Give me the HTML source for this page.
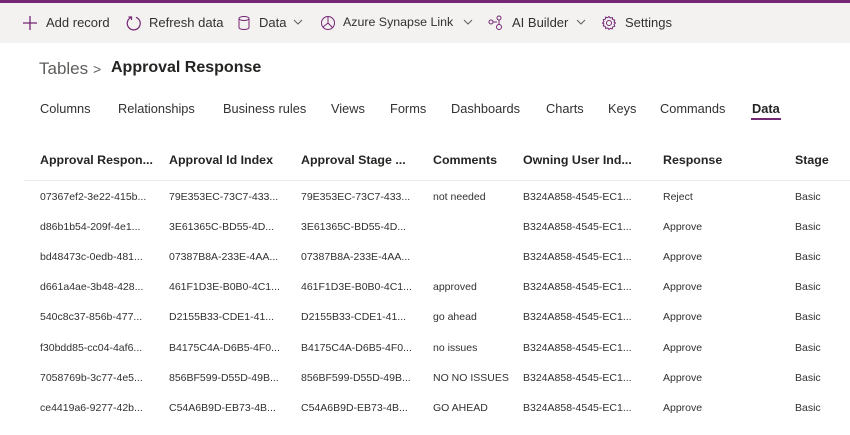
<!DOCTYPE html>
<html><head><style>
body{margin:0;width:850px;height:435px;overflow:hidden;background:#fff;font-family:"Liberation Sans",sans-serif;color:#323130;position:relative}
.top{position:absolute;left:0;top:0;width:850px;height:3px;background:#742774}
.bar{position:absolute;left:0;top:3px;width:850px;height:40px;background:#f3f2f1}
.bar span{position:absolute;top:12px;font-size:13px;color:#323130;white-space:nowrap}
.bar svg{position:absolute;top:12px}
.ab{position:absolute;white-space:nowrap}
.tab{position:absolute;top:101px;font-size:12.8px;color:#323130;white-space:nowrap}
.h{position:absolute;top:153px;font-size:12.4px;font-weight:bold;color:#252423;white-space:nowrap}
.c{position:absolute;font-size:10.5px;color:#323130;white-space:nowrap}
</style></head><body>
<div class="top"></div>
<div class="bar">
<svg style="left:22px" width="16" height="16" viewBox="0 0 16 16"><path d="M8 1v14M1 8h14" stroke="#742774" stroke-width="1.3" fill="none"/></svg>
<span style="left:46px">Add record</span>
<svg style="left:126px" width="16" height="16" viewBox="0 0 16 16"><path d="M5 2.5A6.5 6.5 0 1 0 10 2.3" stroke="#742774" stroke-width="1.2" fill="none"/><path d="M2.5 2h3v3" stroke="#742774" stroke-width="1.2" fill="none"/></svg>
<span style="left:149px">Refresh data</span>
<svg style="left:237px" width="14" height="16" viewBox="0 0 14 16"><ellipse cx="7" cy="3.5" rx="5" ry="2" stroke="#742774" fill="none"/><path d="M2 3.5v9c0 1.1 2.2 2 5 2s5-.9 5-2v-9" stroke="#742774" fill="none"/></svg>
<span style="left:259px">Data</span>
<svg style="left:293px;top:16px" width="10" height="7" viewBox="0 0 10 7"><path d="M1 1l4 4 4-4" stroke="#605e5c" fill="none"/></svg>
<svg style="left:320px" width="16" height="16" viewBox="0 0 16 16"><circle cx="8" cy="8" r="6.5" stroke="#742774" fill="none"/><path d="M8 1.5v6.5l4.5 4.5M8 8L3 12" stroke="#742774" fill="none"/></svg>
<span style="left:343px;font-size:12.4px">Azure Synapse Link</span>
<svg style="left:463px;top:16px" width="10" height="7" viewBox="0 0 10 7"><path d="M1 1l4 4 4-4" stroke="#605e5c" fill="none"/></svg>
<svg style="left:488px" width="16" height="16" viewBox="0 0 16 16"><circle cx="3" cy="7" r="2" stroke="#742774" fill="none"/><circle cx="11" cy="3" r="2" stroke="#742774" fill="none"/><circle cx="11" cy="12" r="2.5" stroke="#742774" fill="none"/><path d="M5 7h4M11 5v4.5" stroke="#742774" fill="none"/></svg>
<span style="left:512px">AI Builder</span>
<svg style="left:576px;top:16px" width="10" height="7" viewBox="0 0 10 7"><path d="M1 1l4 4 4-4" stroke="#605e5c" fill="none"/></svg>
<svg style="left:601px" width="16" height="16" viewBox="0 0 16 16"><circle cx="8" cy="8" r="2.5" stroke="#742774" fill="none"/><path d="M8 1.5l1.3 1.6 2-.6.4 2 2 .6-.6 2L14.5 8l-1.4 1.3.6 2-2 .6-.4 2-2-.6L8 14.5l-1.3-1.6-2 .6-.4-2-2-.6.6-2L1.5 8l1.4-1.3-.6-2 2-.6.4-2 2 .6z" stroke="#742774" fill="none"/></svg>
<span style="left:625px">Settings</span>
</div>
<div class="ab" style="left:39px;top:59px;font-size:17px;color:#605e5c">Tables</div>
<div class="ab" style="left:93px;top:61px;font-size:14px;color:#605e5c">&gt;</div>
<div class="ab" style="left:111px;top:59px;font-size:16px;font-weight:bold;color:#252423">Approval Response</div>
<div class="tab" style="left:40px">Columns</div>
<div class="tab" style="left:118px">Relationships</div>
<div class="tab" style="left:223px">Business rules</div>
<div class="tab" style="left:331px">Views</div>
<div class="tab" style="left:390px">Forms</div>
<div class="tab" style="left:451px">Dashboards</div>
<div class="tab" style="left:546px">Charts</div>
<div class="tab" style="left:608px">Keys</div>
<div class="tab" style="left:660px">Commands</div>
<div class="tab" style="left:752px;font-weight:bold;color:#252423">Data</div>
<div class="ab" style="left:751px;top:118px;width:30px;height:2px;background:#742774"></div>
<div class="h" style="left:40px">Approval Respon...</div>
<div class="h" style="left:169px">Approval Id Index</div>
<div class="h" style="left:301px">Approval Stage ...</div>
<div class="h" style="left:433px">Comments</div>
<div class="h" style="left:523px">Owning User Ind...</div>
<div class="h" style="left:663px">Response</div>
<div class="h" style="left:795px">Stage</div>
<div class="ab" style="left:24px;top:180px;width:826px;height:1px;background:#edebe9"></div>
<div class="c" style="left:40px;top:191px">07367ef2-3e22-415b...</div><div class="c" style="left:169px;top:191px">79E353EC-73C7-433...</div><div class="c" style="left:301px;top:191px">79E353EC-73C7-433...</div><div class="c" style="left:433px;top:191px">not needed</div><div class="c" style="left:523px;top:191px">B324A858-4545-EC1...</div><div class="c" style="left:663px;top:191px">Reject</div><div class="c" style="left:795px;top:191px">Basic</div>
<div class="c" style="left:40px;top:221px">d86b1b54-209f-4e1...</div><div class="c" style="left:169px;top:221px">3E61365C-BD55-4D...</div><div class="c" style="left:301px;top:221px">3E61365C-BD55-4D...</div><div class="c" style="left:523px;top:221px">B324A858-4545-EC1...</div><div class="c" style="left:663px;top:221px">Approve</div><div class="c" style="left:795px;top:221px">Basic</div>
<div class="c" style="left:40px;top:251px">bd48473c-0edb-481...</div><div class="c" style="left:169px;top:251px">07387B8A-233E-4AA...</div><div class="c" style="left:301px;top:251px">07387B8A-233E-4AA...</div><div class="c" style="left:523px;top:251px">B324A858-4545-EC1...</div><div class="c" style="left:663px;top:251px">Approve</div><div class="c" style="left:795px;top:251px">Basic</div>
<div class="c" style="left:40px;top:281px">d661a4ae-3b48-428...</div><div class="c" style="left:169px;top:281px">461F1D3E-B0B0-4C1...</div><div class="c" style="left:301px;top:281px">461F1D3E-B0B0-4C1...</div><div class="c" style="left:433px;top:281px">approved</div><div class="c" style="left:523px;top:281px">B324A858-4545-EC1...</div><div class="c" style="left:663px;top:281px">Approve</div><div class="c" style="left:795px;top:281px">Basic</div>
<div class="c" style="left:40px;top:311px">540c8c37-856b-477...</div><div class="c" style="left:169px;top:311px">D2155B33-CDE1-41...</div><div class="c" style="left:301px;top:311px">D2155B33-CDE1-41...</div><div class="c" style="left:433px;top:311px">go ahead</div><div class="c" style="left:523px;top:311px">B324A858-4545-EC1...</div><div class="c" style="left:663px;top:311px">Approve</div><div class="c" style="left:795px;top:311px">Basic</div>
<div class="c" style="left:40px;top:342px">f30bdd85-cc04-4af6...</div><div class="c" style="left:169px;top:342px">B4175C4A-D6B5-4F0...</div><div class="c" style="left:301px;top:342px">B4175C4A-D6B5-4F0...</div><div class="c" style="left:433px;top:342px">no issues</div><div class="c" style="left:523px;top:342px">B324A858-4545-EC1...</div><div class="c" style="left:663px;top:342px">Approve</div><div class="c" style="left:795px;top:342px">Basic</div>
<div class="c" style="left:40px;top:372px">7058769b-3c77-4e5...</div><div class="c" style="left:169px;top:372px">856BF599-D55D-49B...</div><div class="c" style="left:301px;top:372px">856BF599-D55D-49B...</div><div class="c" style="left:433px;top:372px">NO NO ISSUES</div><div class="c" style="left:523px;top:372px">B324A858-4545-EC1...</div><div class="c" style="left:663px;top:372px">Approve</div><div class="c" style="left:795px;top:372px">Basic</div>
<div class="c" style="left:40px;top:402px">ce4419a6-9277-42b...</div><div class="c" style="left:169px;top:402px">C54A6B9D-EB73-4B...</div><div class="c" style="left:301px;top:402px">C54A6B9D-EB73-4B...</div><div class="c" style="left:433px;top:402px">GO AHEAD</div><div class="c" style="left:523px;top:402px">B324A858-4545-EC1...</div><div class="c" style="left:663px;top:402px">Approve</div><div class="c" style="left:795px;top:402px">Basic</div>
</body></html>
